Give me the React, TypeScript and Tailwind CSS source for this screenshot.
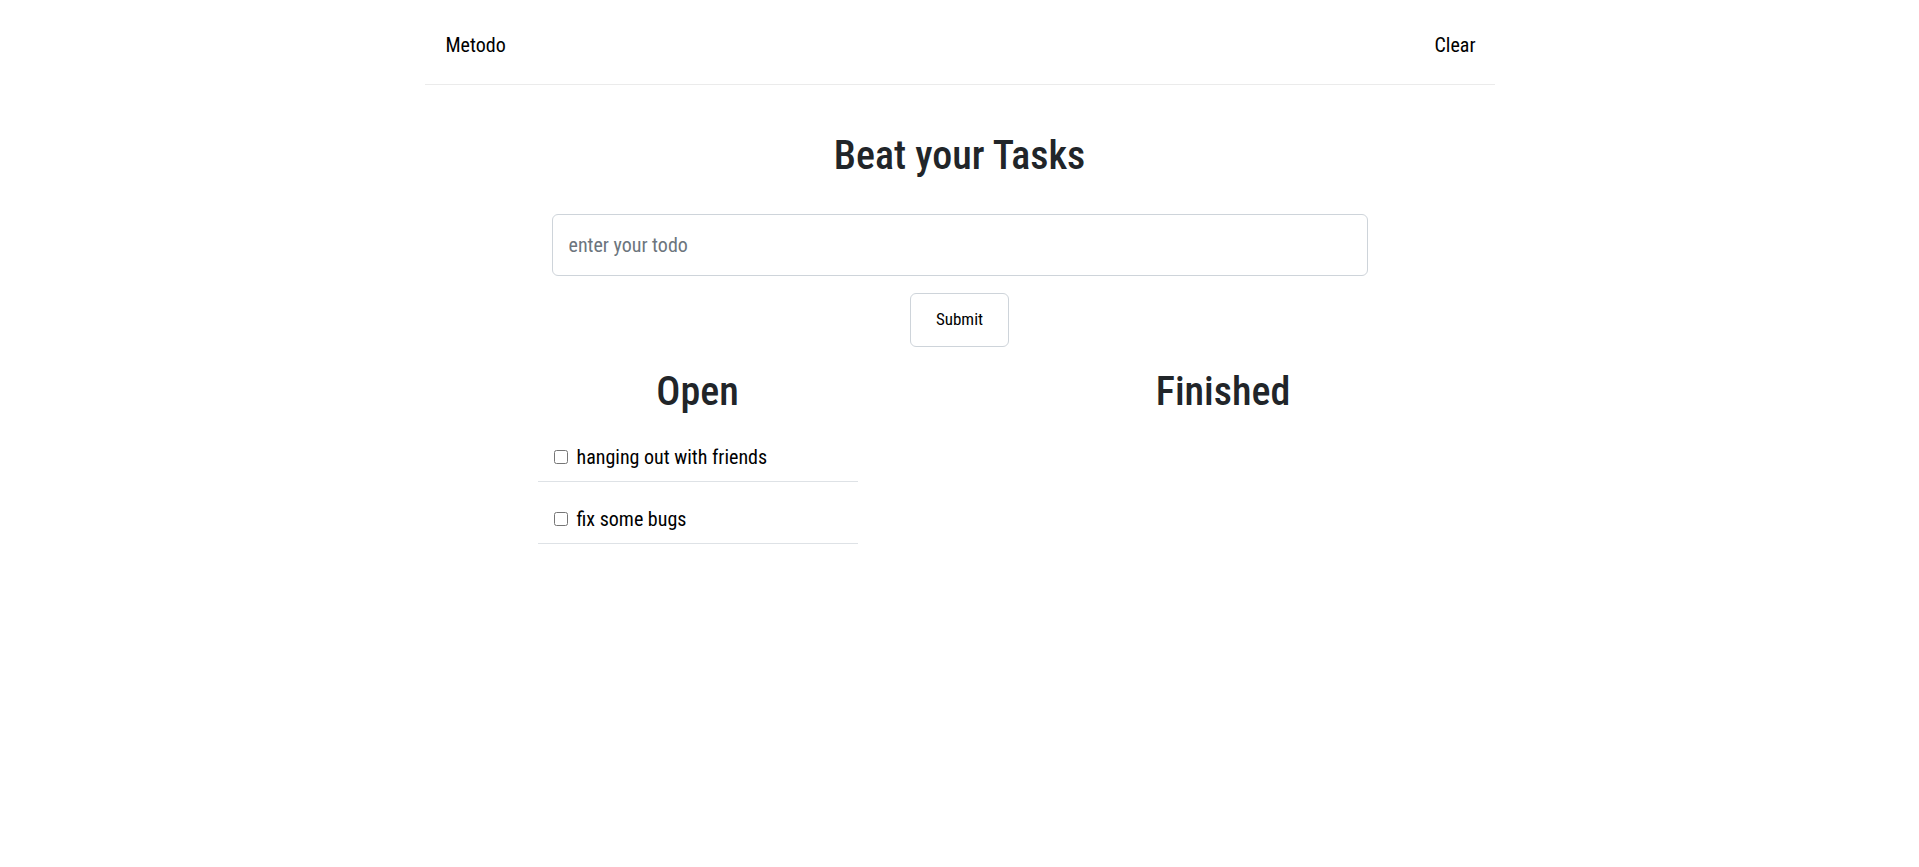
export default function App() {
    const openTodos = ['hanging out with friends', 'fix some bugs']

    return (
        <div className="min-h-screen bg-white text-black" style={{ fontFamily: '"Roboto Condensed", "Liberation Sans Narrow", Roboto, sans-serif' }}>
            {/* Navbar */}
            <nav className="mx-auto w-[1070px] flex items-center justify-between h-[85px] pt-[5px] pl-[21px] pr-[19px] border-b border-[#ebebeb] text-[20px]">
                <span>Metodo</span>
                <span>Clear</span>
            </nav>

            <main className="flex flex-col items-center">
                <h1 className="mt-[47px] text-[40px] leading-[48px] font-medium text-[#212529]">Beat your Tasks</h1>

                <input
                    type="text"
                    placeholder="enter your todo"
                    className="mt-[34px] w-[816px] h-[62px] px-[16px] text-[20px] rounded-[6px] border border-[#ced4da] placeholder:text-[#6c757d] outline-none"
                />

                <button className="mt-[17px] w-[99px] h-[54px] rounded-[6px] border border-[#ced4da] text-[17px] bg-white">
                    Submit
                </button>

                {/* Columns */}
                <div className="mt-[21px] w-[844px] flex justify-between">
                    <section className="w-[320px]">
                        <h2 className="text-center text-[40px] leading-[48px] font-medium text-[#212529]">Open</h2>
                        <ul className="mt-[4px]">
                            {openTodos.map((todo) => (
                                <li key={todo} className="flex items-center h-[62px] pt-[12px] px-[16px] border-b border-[#dee2e6] text-[20px]">
                                    <input type="checkbox" className="w-[14px] h-[14px] mr-[9px]" />
                                    <span>{todo}</span>
                                </li>
                            ))}
                        </ul>
                    </section>
                    <section className="w-[317px]">
                        <h2 className="text-center text-[40px] leading-[48px] font-medium text-[#212529]">Finished</h2>
                    </section>
                </div>
            </main>
        </div>
    )
}
